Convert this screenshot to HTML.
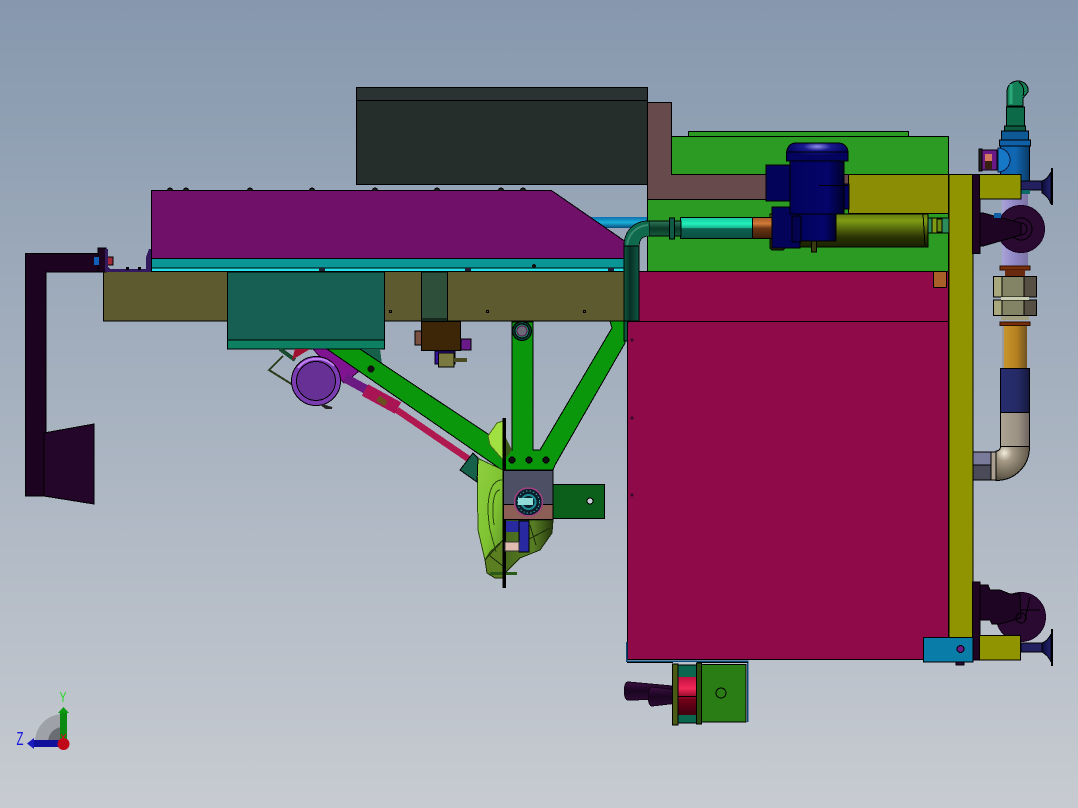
<!DOCTYPE html>
<html><head><meta charset="utf-8"><style>
html,body{margin:0;padding:0;background:#a8b2bf}
svg{display:block}
</style></head><body>
<svg width="1078" height="808" viewBox="0 0 1078 808" xmlns="http://www.w3.org/2000/svg" font-family="Liberation Sans, sans-serif" shape-rendering="crispEdges">
<defs>
<linearGradient id="bg" x1="0" y1="0" x2="0" y2="1"><stop offset="0" stop-color="#8698ae"/><stop offset="1" stop-color="#c7cbd1"/></linearGradient>
<linearGradient id="cyl" x1="0" y1="0" x2="0" y2="1"><stop offset="0" stop-color="#5f7a10"/><stop offset=".2" stop-color="#7f9c14"/><stop offset=".7" stop-color="#2a3304"/><stop offset="1" stop-color="#1a2000"/></linearGradient>
<linearGradient id="cyan" x1="0" y1="0" x2="0" y2="1"><stop offset="0" stop-color="#17c79b"/><stop offset=".3" stop-color="#22f0bb"/><stop offset=".5" stop-color="#18b08e"/><stop offset=".52" stop-color="#0e5f50"/><stop offset="1" stop-color="#0a4f44"/></linearGradient>
<linearGradient id="cop" x1="0" y1="0" x2="0" y2="1"><stop offset="0" stop-color="#a85a28"/><stop offset=".3" stop-color="#d07a38"/><stop offset=".52" stop-color="#6a3412"/><stop offset="1" stop-color="#3c1e0a"/></linearGradient>
<linearGradient id="dkg" x1="0" y1="0" x2="0" y2="1"><stop offset="0" stop-color="#2f7a5a"/><stop offset=".5" stop-color="#0b3a28"/><stop offset="1" stop-color="#155a3e"/></linearGradient>
<linearGradient id="vp" x1="0" y1="0" x2="1" y2="0"><stop offset="0" stop-color="#0d5a3f"/><stop offset=".4" stop-color="#082f24"/><stop offset="1" stop-color="#0f5a44"/></linearGradient>
<linearGradient id="blu" x1="0" y1="0" x2="1" y2="0"><stop offset="0" stop-color="#02025c"/><stop offset=".7" stop-color="#04046a"/><stop offset="1" stop-color="#01012c"/></linearGradient>
<linearGradient id="lav" x1="0" y1="0" x2="1" y2="0"><stop offset="0" stop-color="#a9a3d8"/><stop offset=".5" stop-color="#8f86c4"/><stop offset="1" stop-color="#7c74a4"/></linearGradient>
<linearGradient id="org" x1="0" y1="0" x2="1" y2="0"><stop offset="0" stop-color="#c8952c"/><stop offset=".55" stop-color="#b58020"/><stop offset="1" stop-color="#6f5220"/></linearGradient>
<linearGradient id="nav" x1="0" y1="0" x2="1" y2="0"><stop offset="0" stop-color="#262c6e"/><stop offset=".6" stop-color="#252a66"/><stop offset="1" stop-color="#15183c"/></linearGradient>
<linearGradient id="gry" x1="0" y1="0" x2="1" y2="0"><stop offset="0" stop-color="#aca392"/><stop offset=".6" stop-color="#9c9284"/><stop offset="1" stop-color="#6b6260"/></linearGradient>
<radialGradient id="elb" cx=".25" cy=".2" r=".95"><stop offset="0" stop-color="#f3eee0"/><stop offset=".25" stop-color="#a59a85"/><stop offset=".7" stop-color="#6b6252"/><stop offset="1" stop-color="#2d2a28"/></radialGradient>
<linearGradient id="tblue" x1="0" y1="0" x2="1" y2="0"><stop offset="0" stop-color="#1060a8"/><stop offset=".5" stop-color="#1068b4"/><stop offset="1" stop-color="#0a3a64"/></linearGradient>
<linearGradient id="red" x1="0" y1="0" x2="0" y2="1"><stop offset="0" stop-color="#c01040"/><stop offset=".3" stop-color="#f02858"/><stop offset=".6" stop-color="#700018"/><stop offset="1" stop-color="#400010"/></linearGradient>
<linearGradient id="hnd" x1="0" y1="0" x2="0" y2="1"><stop offset="0" stop-color="#3c1042"/><stop offset=".5" stop-color="#1a0520"/><stop offset="1" stop-color="#2c0c34"/></linearGradient>
<linearGradient id="bell" x1="0" y1="0" x2="1" y2="0"><stop offset="0" stop-color="#0e0c3a"/><stop offset="1" stop-color="#24246e"/></linearGradient>
<linearGradient id="cy2" x1="0" y1="0" x2="0" y2="1"><stop offset="0" stop-color="#0e6fb0"/><stop offset=".5" stop-color="#18b0d8"/><stop offset="1" stop-color="#0a4a7a"/></linearGradient>
<radialGradient id="cap" cx=".5" cy=".2" r=".5"><stop offset="0" stop-color="#8e8ee8"/><stop offset=".45" stop-color="#1a1a90"/><stop offset="1" stop-color="#04045e"/></radialGradient>
<linearGradient id="limeg" x1="0" y1="0" x2="1" y2="1"><stop offset="0" stop-color="#8fd040"/><stop offset=".6" stop-color="#7ec232"/><stop offset="1" stop-color="#5f9426"/></linearGradient>
<linearGradient id="oliv" x1="0" y1="0" x2="1" y2="0"><stop offset="0" stop-color="#3a5a16"/><stop offset=".7" stop-color="#587e24"/><stop offset="1" stop-color="#26380c"/></linearGradient>
</defs>
<rect width="1078" height="808" fill="url(#bg)"/>

<g stroke="#000" stroke-width="1">
<rect x="356.500" y="87.500" width="291" height="13" fill="#2a3331"/>
<rect x="356.500" y="100.500" width="291" height="84" fill="#262e2c"/>
<rect x="590" y="217" width="60" height="11" fill="url(#cy2)" stroke="none"/>
<path d="M647.500 102.500H671.500V174.500H849V199.500H647.500Z" fill="#664a4c"/>
<rect x="688.500" y="131.500" width="220" height="6" fill="#2b9b24"/>
<rect x="671.500" y="136.500" width="277" height="38" fill="#2b9b24"/>
<rect x="647.500" y="199.500" width="301" height="72" fill="#2b9b24"/>
<rect x="638.500" y="271.500" width="310" height="50" fill="#8f0a48"/>
<rect x="627.500" y="321.500" width="321" height="338" fill="#8f0a48"/>
<rect x="933.500" y="271.500" width="13" height="16" fill="#a85f28"/>
<rect x="848.500" y="174.500" width="100" height="39" fill="#8b8e04"/>
</g>
<g fill="#3a0a2a"><circle cx="632" cy="340" r="1.500"/><circle cx="632" cy="418" r="1.500"/><circle cx="632" cy="495" r="1.500"/></g>

<!-- cylinder -->
<path d="M770 226V214H928V247H770Z" fill="url(#cyl)" stroke="#000"/>
<rect x="770" y="232" width="15" height="18" rx="3" fill="#2a3304" stroke="#000"/>
<line x1="923" y1="214" x2="925" y2="246" stroke="#000"/>
<rect x="928" y="218" width="21" height="15" fill="#2d8c5c" stroke="#000"/>
<rect x="932" y="218" width="5" height="15" fill="#7f9c14" stroke="#000"/>
<rect x="937" y="219" width="5" height="13" fill="#6a8a14" stroke="#000"/>
<!-- pipes -->
<rect x="680.500" y="217.500" width="72" height="21" fill="url(#cyan)" stroke="#000"/>
<rect x="752.500" y="217.500" width="20" height="21" fill="url(#cop)" stroke="#000"/>
<rect x="649" y="221" width="32" height="15" fill="url(#dkg)" stroke="#000"/>
<rect x="669.500" y="218" width="5" height="21" fill="#0f5a44" stroke="#000"/>

<!-- motor -->
<g stroke="#000">
<rect x="772" y="207" width="28" height="41" fill="#03035a"/>
<rect x="766" y="165" width="25" height="36" fill="#03035a"/>
<rect x="833" y="184" width="16" height="25" fill="#03035a"/>
<rect x="790" y="160" width="54" height="54" fill="url(#blu)"/>
<path d="M786.500 161V153C787 146 791 143 796 143H838C844 143 848 147 848 153V161Z" fill="url(#cap)"/>
<line x1="786.500" y1="152" x2="848" y2="152" stroke="#000"/>
<line x1="819" y1="185.500" x2="848" y2="185.500" stroke="#000"/>
<rect x="798" y="214" width="38" height="27" fill="url(#blu)"/>
<rect x="792" y="216" width="9" height="26" fill="#03034e"/>
<rect x="811.500" y="241" width="5" height="11" fill="#3a3a10"/>
</g>

<!-- purple top + bars -->
<g stroke="#000">
<rect x="103.500" y="271.500" width="521" height="49.500" fill="#5d5a30" stroke-width="1"/>
<path d="M151.500 258.500V190.500H551.500L626 242V258.500Z" fill="#701068"/>
<rect x="151.500" y="258.500" width="473" height="9.500" fill="#0a9696"/>
<rect x="151.500" y="268" width="473" height="3.500" fill="#25e0e4"/>
<rect x="227.500" y="272" width="157" height="68" fill="#165f52"/>
<rect x="227.500" y="340" width="157" height="9" fill="#0c8060"/>
<rect x="421.500" y="272" width="26" height="49" fill="#2e4f3a"/>
</g>
<line x1="421" y1="319" x2="447" y2="319" stroke="#000"/>
<g fill="#222" stroke="#000"><path d="M167.500 190.500A2.500 2.500 0 0 1 172.500 190.500"/><path d="M183.500 190.500A2.500 2.500 0 0 1 188.500 190.500"/><path d="M247.500 190.500A2.500 2.500 0 0 1 252.500 190.500"/><path d="M309.500 190.500A2.500 2.500 0 0 1 314.500 190.500"/><path d="M372.500 190.500A2.500 2.500 0 0 1 377.500 190.500"/><path d="M434.500 190.500A2.500 2.500 0 0 1 439.500 190.500"/><path d="M498.500 190.500A2.500 2.500 0 0 1 503.500 190.500"/><path d="M520.500 190.500A2.500 2.500 0 0 1 525.500 190.500"/></g>
<g fill="#111"><circle cx="534" cy="266" r="2"/><rect x="319" y="268" width="6" height="3" fill="#223"/><rect x="465" y="268" width="6" height="3" fill="#223"/><rect x="608" y="268" width="6" height="3" fill="#223"/></g>
<g fill="#5d5a30" stroke="#000"><rect x="389.500" y="310.500" width="2" height="2"/><rect x="486.500" y="310.500" width="2" height="2"/><rect x="583.500" y="310.500" width="2" height="2"/></g>

<!-- left bracket -->
<path d="M25.500 253.500H103V272H46V496H25.500Z" fill="#1c0420" stroke="#000"/>
<path d="M44 433L94 424V504L44 496Z" fill="#24062a" stroke="#000"/>
<rect x="98" y="248" width="8" height="24" fill="#1c0420" stroke="#000"/>
<rect x="94" y="257" width="5" height="8" fill="#1060b8"/>
<rect x="107" y="257" width="6" height="8" fill="#a02838" stroke="#000"/>
<path d="M105 249H108V267L110 269H146V257L149 249H151V272H105Z" fill="#33195e"/>
<rect x="126" y="267" width="3" height="3" fill="#000"/><rect x="138" y="267" width="3" height="3" fill="#000"/>

<!-- behind items -->
<path d="M283 356L269 370L293 385" fill="none" stroke="#2a3a1a" stroke-width="2"/>
<path d="M280 349L295 360" stroke="#1a4a30" stroke-width="4"/>
<path d="M295 349H310L292 360Z" fill="#a01030"/>
<path d="M313 349H350L358 372L344 383Z" fill="#801490" stroke="#300030"/>
<path d="M360 349H380L382 364L376 365Z" fill="#17604a"/>

<!-- rod -->
<path d="M345 378L367 390" stroke="#6a1a80" stroke-width="9"/>
<path d="M365 390L398 408" stroke="#a81454" stroke-width="13"/>
<path d="M397 410L470 460" stroke="#b01850" stroke-width="6.500"/>
<path d="M378 398L386 404" stroke="#6a5020" stroke-width="6"/>

<!-- green frame -->
<path d="M327 349H360L512 450V322H533V450H540L612 328L610 321H628L625 343L555 465L553 470H502Z" fill="#0b970b" stroke="#000"/>
<circle cx="371" cy="369" r="3.500" fill="#111"/>

<!-- vertical pipe over frame -->
<path d="M649 228.500C638 228.500 631.500 235 631.500 247" fill="none" stroke="#000" stroke-width="16"/>
<path d="M649 228.500C638 228.500 631.500 235 631.500 247" fill="none" stroke="#0f6a4d" stroke-width="14.500"/>
<path d="M648 225C638 226 629 232 627 245" fill="none" stroke="#3a8a70" stroke-width="2"/>
<rect x="624" y="246" width="15" height="75" fill="url(#vp)" stroke="#000"/>
<rect x="624" y="321" width="3.500" height="20" fill="#0d5a3f" stroke="#000"/>

<!-- purple motor -->
<circle cx="316" cy="381" r="24.500" fill="#7a3cb0" stroke="#000"/>
<path d="M298 368A24 24 0 0 1 334 366" fill="none" stroke="#c080f0" stroke-width="2"/>
<circle cx="316" cy="381" r="19.500" fill="#663094" stroke="#000"/>
<path d="M322 405L332 408L326 408Z" fill="#222" stroke="#222" stroke-width="2"/>

<!-- valve -->
<rect x="415" y="331" width="7" height="14" fill="#7a5040" stroke="#000"/>
<rect x="435" y="351" width="20" height="13" fill="#3810a0" stroke="#000"/>
<rect x="461" y="339" width="10" height="11" fill="#6a1a88" stroke="#000"/>
<rect x="421.500" y="321.500" width="39" height="29" fill="#3d2508" stroke="#000"/>
<rect x="438.500" y="353" width="15.500" height="14" fill="#7a7a40" stroke="#000"/>
<path d="M454 360H467" stroke="#4a4a20" stroke-width="4"/>

<!-- ring -->
<circle cx="522" cy="331" r="9.500" fill="#0a3a30" stroke="#000"/>
<circle cx="522" cy="331" r="7" fill="#1a8a6a" stroke="#000"/>
<circle cx="522" cy="331" r="5" fill="#6b6b78" stroke="#601050"/>

<!-- lime body -->
<path d="M488 436L497 423L503 421V460L490 445Z" fill="#a0e040" stroke="#4a6a20"/>
<path d="M506 438L512 450L506 458Z" fill="#3a5a18"/>
<path d="M505 520H553L552 533L540 550L520 558L505 573L495 578L487 573L490 530Z" fill="url(#oliv)" stroke="#1a2a08"/>
<path d="M477 458L503 470V540L490 552L485 560L478 530Z" fill="url(#limeg)" stroke="#2a4a10"/>
<path d="M485 560L503 540V578L495 578L487 573Z" fill="#5a7e20" stroke="#1a2a08"/>
<path d="M502 480C490 480 485 500 490 530L496 552" fill="none" stroke="#2a4a10"/>
<path d="M500 490C494 490 491 505 494 525" fill="none" stroke="#2a4a10"/>
<path d="M530 525L536 545M512 548L550 528M490 556L503 566" fill="none" stroke="#1a2a08"/>
<path d="M460 470L473 453L478 458L477 482Z" fill="#17604a" stroke="#000"/>
<rect x="490" y="572" width="27" height="3" fill="#2a5a18"/>
<rect x="502.500" y="418" width="3.500" height="170" fill="#000"/>
<rect x="506" y="521" width="14" height="11" fill="#2a2aa0"/>
<rect x="519" y="521" width="10" height="31" fill="#2828a0" stroke="#000"/>
<rect x="505" y="542" width="14" height="9" fill="#e0bcb0" stroke="#333"/>
<!-- block -->
<rect x="553" y="484.500" width="51.500" height="34" fill="#0b5f1a" stroke="#000"/>
<circle cx="590" cy="501" r="3" fill="#c8ccd4" stroke="#000"/>
<rect x="503.500" y="470.500" width="49.500" height="34" fill="#4d5064" stroke="#000"/>
<rect x="503.500" y="504.500" width="49.500" height="15" fill="#8b5f55" stroke="#000"/>
<circle cx="528.500" cy="502" r="14" fill="#0c1e2a" stroke="#a04080" stroke-width="1.500"/>
<circle cx="528.500" cy="502" r="11" fill="none" stroke="#3aa8b4" stroke-dasharray="1.500 2"/>
<circle cx="528.500" cy="502" r="7" fill="none" stroke="#1d8a94" stroke-width="2"/>
<rect x="518" y="498" width="15" height="7" fill="#90dcd8"/>
<g fill="#111" stroke="#000"><circle cx="512" cy="460" r="3"/><circle cx="529" cy="460" r="3"/><circle cx="546" cy="460" r="3"/></g>

<!-- bottom assembly -->
<path d="M626.500 642V661H747.500V722" fill="none" stroke="#0e4a78" stroke-width="1.500"/>
<path d="M627 662.500H673M697 662.500H748" stroke="#000" fill="none"/>
<rect x="678" y="665" width="19" height="58" fill="#0b6650" stroke="#000"/>
<rect x="678" y="677" width="19" height="38" fill="url(#red)"/>
<line x1="678" y1="696.500" x2="697" y2="696.500" stroke="#000"/>
<path d="M628 682L672 686V699L628 700C623 700 623 682 628 682Z" fill="url(#hnd)" stroke="#140418"/>
<path d="M652 687L678 690V703L652 706C647 706 647 687 652 687Z" fill="url(#hnd)" stroke="#140418"/>
<rect x="672.500" y="664" width="5.500" height="61" fill="#4a5a14" stroke="#000"/>
<rect x="696.500" y="663" width="5" height="61" fill="#2a4a10" stroke="#000"/>
<rect x="701.500" y="664.500" width="44.500" height="57.500" fill="#2a7d14" stroke="#000"/>
<circle cx="721" cy="693" r="5" fill="none" stroke="#000"/>

<!-- right column -->
<rect x="1002" y="182" width="26" height="86" fill="url(#lav)"/>
<path d="M1007 106V92C1007 85 1012 81 1018 81C1025 81 1029 87 1028 92L1023 98V106Z" fill="#138058" stroke="#000"/>
<path d="M1011 84V104" stroke="#2ca87c" stroke-width="3"/>
<path d="M1019 82C1023 85 1025 90 1023 96" fill="none" stroke="#000"/>
<rect x="1006.500" y="107" width="18" height="19" fill="#0d6a48" stroke="#000"/>
<rect x="1004.500" y="126" width="21" height="5" fill="#0d5a40" stroke="#000"/>
<rect x="1001.500" y="131" width="27" height="9" fill="#0e5a96" stroke="#000"/>
<rect x="999.500" y="140" width="31" height="6" fill="#1060a8" stroke="#000"/>
<rect x="1000.500" y="146" width="29" height="35" fill="url(#tblue)" stroke="#000"/>
<!-- purple valve -->
<rect x="979" y="149" width="3" height="22" fill="#222" stroke="#000"/>
<rect x="982" y="150" width="15" height="20" fill="#6a1a88" stroke="#000"/>
<rect x="985" y="154" width="7" height="7" fill="#d07860"/>
<rect x="985" y="161" width="7" height="8" fill="#3a2010"/>
<path d="M998 148A12 12 0 0 1 998 172Z" fill="#1878c8" stroke="#0a1a40"/>
<!-- stem right -->
<rect x="1021" y="181" width="21" height="9" fill="#22205e" stroke="#000"/>
<rect x="1021" y="190" width="9" height="4" fill="#0d6a68"/>
<path d="M1042 181C1046 180 1049 176 1051 172V204C1049 198 1046 195 1042 193Z" fill="url(#bell)" stroke="#000"/>
<rect x="1051" y="168" width="2" height="37" fill="#000"/>
<!-- wheel -->
<circle cx="1021" cy="229" r="23.500" fill="#2a0a30" stroke="#180420"/>
<circle cx="1021" cy="229" r="11" fill="none" stroke="#000"/>
<circle cx="1021" cy="229" r="6" fill="none" stroke="#000"/>
<path d="M980 213H983L1021 223V235L983 246H980Z" fill="#1e0524" stroke="#000"/>
<rect x="994" y="213" width="7" height="5" fill="#1060a8"/>
<!-- yellow vertical -->
<rect x="949" y="174.500" width="24" height="463" fill="#8f9400" stroke="#000"/>
<rect x="972.500" y="174.500" width="7.500" height="79" fill="#1f0424" stroke="#000"/>
<rect x="979.500" y="174.500" width="41.500" height="24.500" fill="#8f9400" stroke="#000"/>
<!-- nuts -->
<rect x="1000" y="266" width="30" height="4" fill="#7a2e0a" stroke="#2a1000"/>
<rect x="1005" y="270" width="20" height="6" fill="#6a2a10"/>
<g stroke="#000">
<rect x="993.500" y="276.500" width="43" height="20.500" fill="#a8a87c"/>
<rect x="1002" y="276.500" width="22" height="20.500" fill="#838465"/>
<rect x="1024" y="276.500" width="12.500" height="20.500" fill="#564f44"/>
<rect x="993.500" y="300" width="43" height="15.500" fill="#a8a87c"/>
<rect x="1002" y="300" width="22" height="15.500" fill="#838465"/>
<rect x="1024" y="300" width="12.500" height="15.500" fill="#564f44"/>
</g>
<rect x="1001" y="297" width="28" height="3" fill="#c8ccb0"/>
<rect x="1001" y="316" width="28" height="4" fill="#a0a080"/>
<rect x="1000" y="322" width="30" height="3.500" fill="#7a2e0a" stroke="#2a1000"/>
<rect x="1002" y="326" width="2" height="42" fill="#9a9aa0"/>
<rect x="1004" y="326" width="23" height="42" fill="url(#org)"/>
<!-- elbow -->
<path d="M996 451C1000 451 1000.500 448 1000.500 446H1029.500V447C1029.500 466 1015 480.500 996 480.500Z" fill="url(#elb)" stroke="#000"/>
<rect x="1000.500" y="368.500" width="29" height="44" fill="url(#nav)" stroke="#000"/>
<rect x="1000.500" y="412.500" width="29" height="34" fill="url(#gry)" stroke="#000"/>
<rect x="973" y="452" width="18" height="13" fill="#7a7a9a" stroke="#000"/>
<rect x="973" y="465" width="18" height="15" fill="#4a4a58" stroke="#000"/>
<rect x="991" y="452" width="5" height="28" fill="#aa9f90" stroke="#000"/>
<!-- bottom right -->
<circle cx="1021" cy="617" r="24.500" fill="#2a0a30" stroke="#180420"/>
<path d="M980 585H988L990 590H1000L1010 594H1020L1021 618L1000 624H992L990 620L980 620Z" fill="#1e0524" stroke="#000"/>
<circle cx="1021" cy="618" r="5" fill="none" stroke="#000"/>
<path d="M1030 597L1025 620M1020 610L1040 610" stroke="#000" fill="none"/>
<rect x="972.500" y="582" width="7.500" height="78" fill="#1f0424" stroke="#000"/>
<rect x="979.500" y="635.500" width="41" height="24.500" fill="#8f9400" stroke="#000"/>
<rect x="1021" y="643" width="21" height="9" fill="#22205e" stroke="#000"/>
<path d="M1042 643C1046 642 1049 638 1051 634V662C1049 657 1046 654 1042 652Z" fill="url(#bell)" stroke="#000"/>
<rect x="1051" y="629" width="2" height="37" fill="#000"/>
<rect x="956" y="662" width="8" height="3" fill="#300838" stroke="#000"/>
<rect x="923.500" y="637.500" width="49.500" height="24.500" fill="#0a7ca8" stroke="#000"/>
<circle cx="960.500" cy="649" r="3.500" fill="#6a1a88" stroke="#000"/>

<!-- triad -->
<g shape-rendering="auto">
<path d="M35 742A28 28 0 0 1 63 714V742Z" fill="#9ea1a8"/>
<path d="M48 742A15 15 0 0 1 63 727V742Z" fill="#6a6d72"/>
<rect x="60" y="712" width="7" height="28" fill="#0a8a10"/>
<path d="M58 713L63.500 707L69 713Z" fill="#0a9a10"/>
<rect x="34" y="740" width="27" height="7" fill="#10109a"/>
<path d="M27 743.500L34 738V749Z" fill="#1a1ac0"/>
<circle cx="63.500" cy="744" r="6" fill="#c00818"/>
<path d="M61 734L65 740M66 734L61 740" stroke="#d01020" fill="none"/>
<text x="59.500" y="702" font-size="15" fill="#22d822" textLength="7" lengthAdjust="spacingAndGlyphs">Y</text>
<text x="16.500" y="745" font-size="18" fill="#1818e0" textLength="7" lengthAdjust="spacingAndGlyphs">Z</text>
</g>
</svg>
</body></html>
